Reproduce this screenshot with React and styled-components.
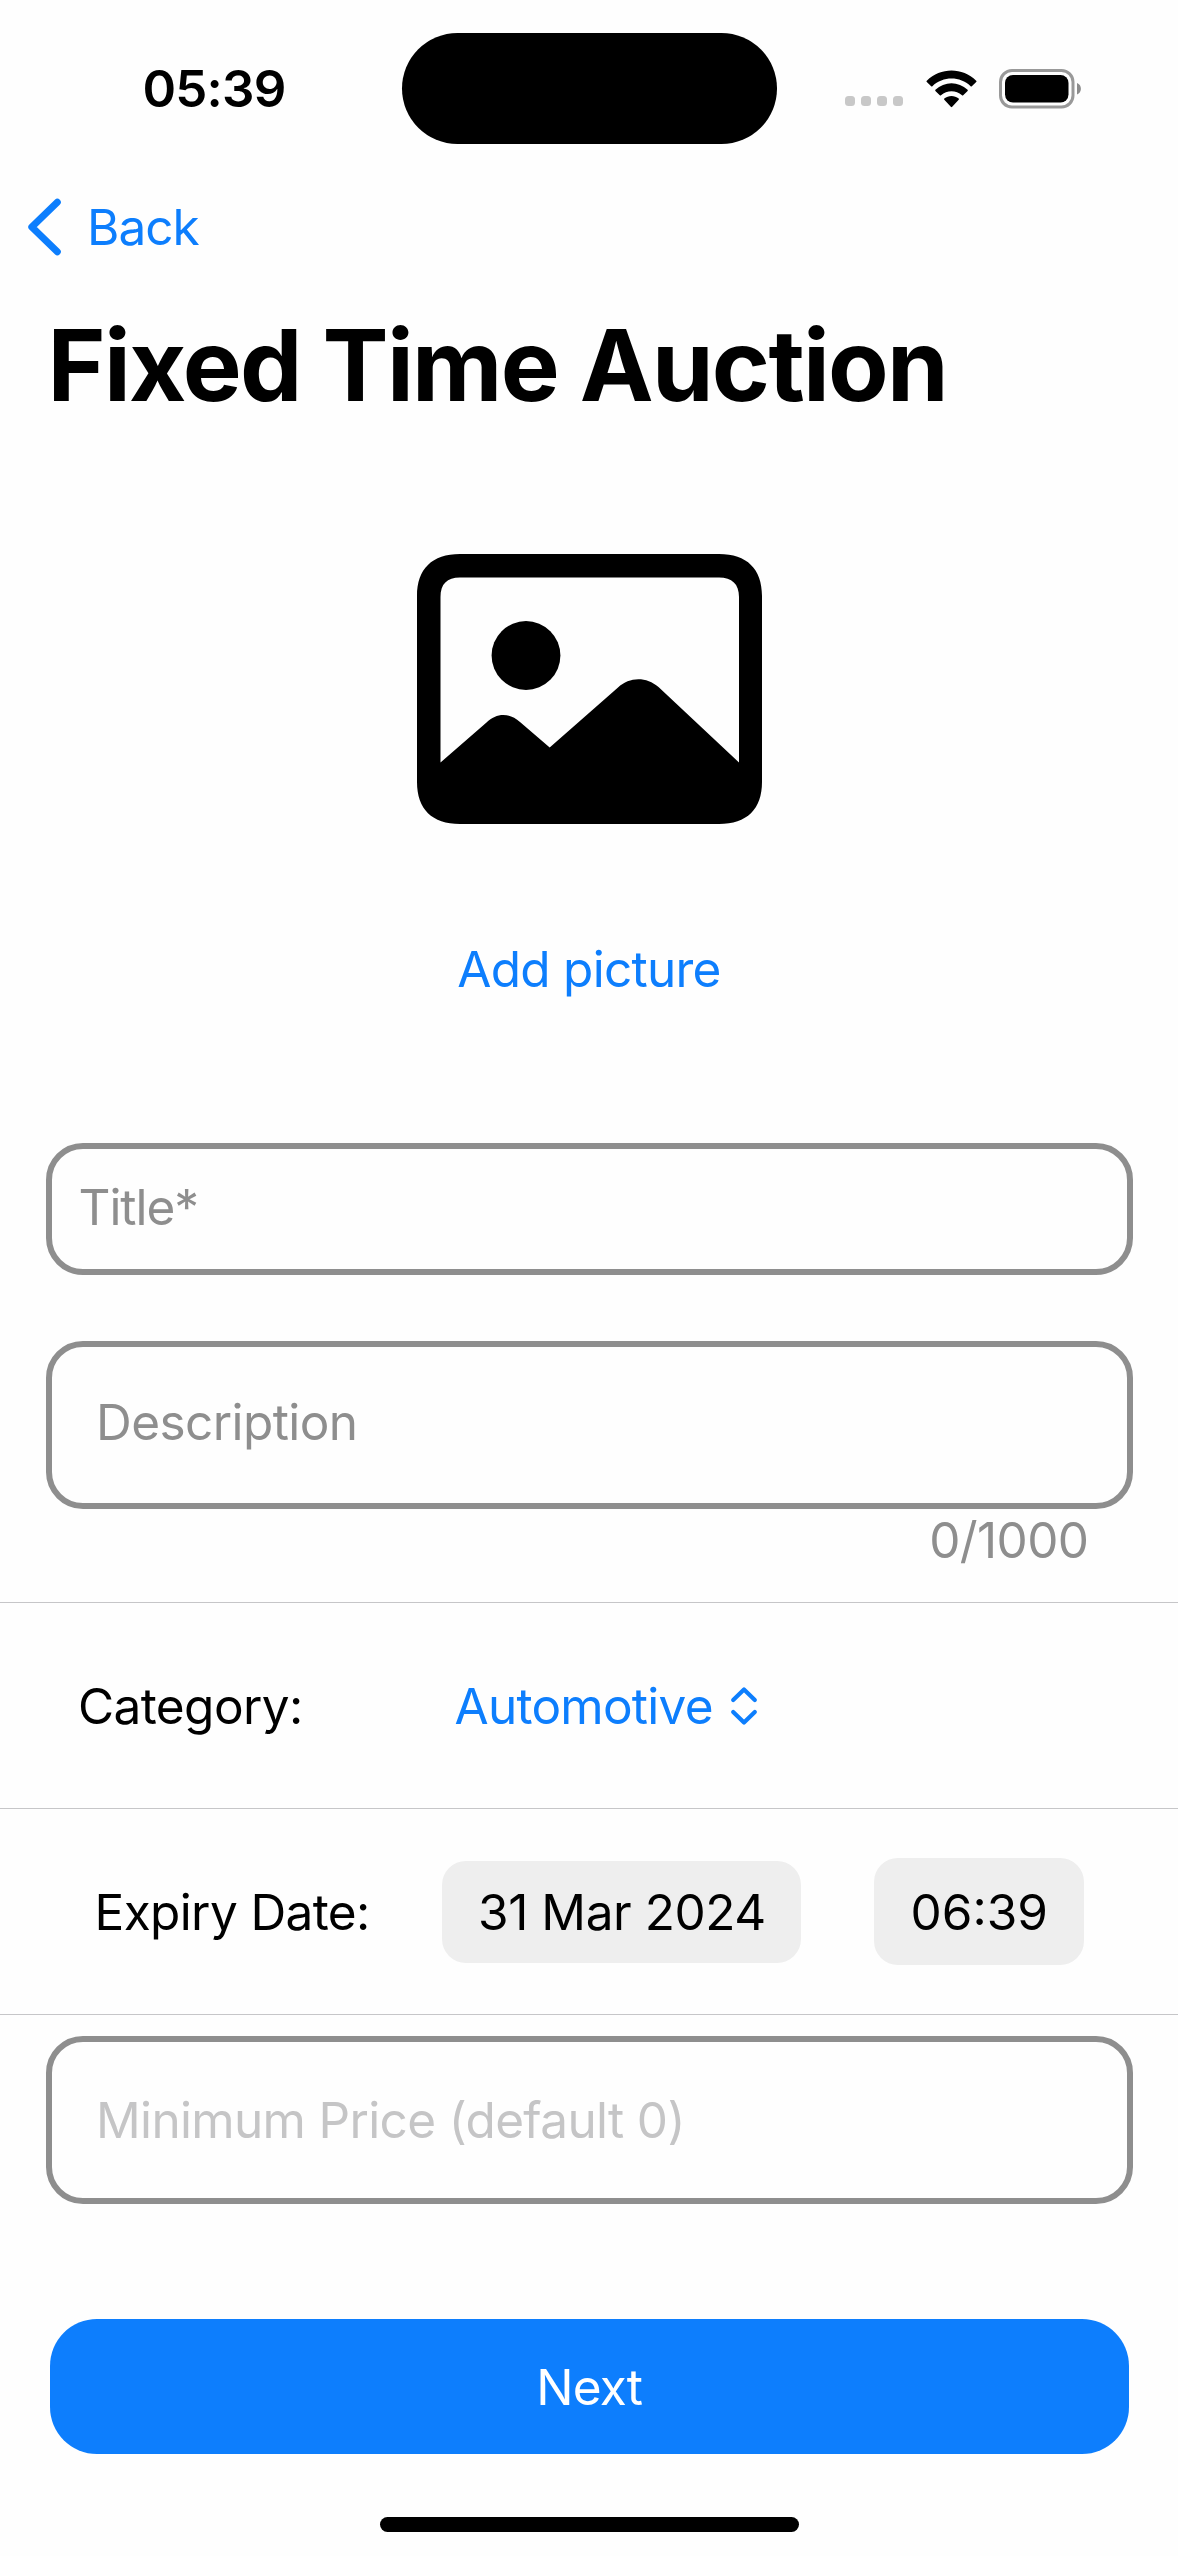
import React from "react";
import styled, { createGlobalStyle } from "styled-components";

const color = {
  page: "#fefefe",
  ink: "#000000",
  accent: "#0d7efd",
  grey: "#8e8e8e",
  placeholder: "#c5c5c6",
  line: "#c6c6c8",
  pill: "#eeeeee",
};

const GlobalStyle = createGlobalStyle`
  *, *::before, *::after { box-sizing: border-box; }
  body {
    margin: 0;
    background: ${color.page};
    font-family: Inter, "Liberation Sans", sans-serif;
  }
  button {
    margin: 0;
    padding: 0;
    border: 0;
    background: none;
    font: inherit;
    cursor: pointer;
  }
  svg { display: block; flex: none; }
`;

const Screen = styled.div`
  display: flex;
  flex-direction: column;
  width: 1178px;
  height: 2556px;
  overflow: hidden;
  background: ${color.page};
  color: ${color.ink};
`;

const Label = styled.span`
  font-size: 49.5px;
  line-height: 60px;
  font-weight: 400;
  white-space: nowrap;
  color: ${(p) => p.$color || "inherit"};
  letter-spacing: ${(p) => p.$tracking || 0}px;
`;

/* Status bar */
const StatusBar = styled.header`
  display: grid;
  grid-template-columns: 401.5px 375px 1fr;
  align-items: center;
  height: 177px;
  flex: none;
`;

const Clock = styled.time`
  padding-left: 142.5px;
  font-size: 51px;
  line-height: 60px;
  font-weight: 600;
  letter-spacing: -0.8px;
`;

const Island = styled.div`
  height: 110.5px;
  border-radius: 56px;
  background: ${color.ink};
`;

const Indicators = styled.div`
  display: flex;
  align-items: center;
  padding-left: 68.5px;
`;

const SignalDots = styled.div`
  display: flex;
  gap: 6px;
  margin: 25px 22.5px 0 0;
`;

const SignalDot = styled.i`
  width: 10px;
  height: 10px;
  border-radius: 3.5px;
  background: #c8c8c8;
`;

const BatterySlot = styled.div`
  margin-left: 22.5px;
`;

/* Navigation */
const NavBar = styled.nav`
  height: 100px;
  flex: none;
  display: flex;
  align-items: center;
  padding-left: 27px;
`;

const BackButton = styled.button`
  display: flex;
  align-items: center;
  gap: 25px;
  color: ${color.accent};
`;

const Heading = styled.h1`
  margin: 0;
  height: 176px;
  flex: none;
  padding-left: 47.5px;
  font-size: 99px;
  line-height: 176px;
  font-weight: 700;
  letter-spacing: -1.7px;
  white-space: nowrap;
`;

/* Picture */
const PictureSection = styled.section`
  display: flex;
  flex-direction: column;
  align-items: center;
  gap: 115px;
  height: 690px;
  flex: none;
  padding-top: 101px;
`;

/* Fields */
const Field = styled.div`
  display: flex;
  align-items: center;
  flex: none;
  height: ${(p) => p.$height}px;
  margin: ${(p) => p.$top || 0}px 45px 0 45.5px;
  padding-left: ${(p) => p.$inset}px;
  padding-bottom: ${(p) => p.$lift || 0}px;
  border: 6px solid ${color.grey};
  border-radius: 37px;
`;

const Counter = styled.div`
  display: flex;
  justify-content: flex-end;
  flex: none;
  height: 93px;
  padding: 1px 89.5px 0 0;
`;

const Row = styled.div`
  display: flex;
  align-items: center;
  flex: none;
  height: 206px;
  border-top: 1px solid ${color.line};
  padding-left: ${(p) => p.$inset}px;
`;

const RowLabel = styled(Label)`
  width: ${(p) => p.$width}px;
  flex: none;
`;

const Picker = styled.button`
  display: flex;
  align-items: center;
  gap: 17px;
  color: ${color.accent};
`;

const Pill = styled.button`
  display: flex;
  align-items: center;
  flex: none;
  width: ${(p) => p.$width}px;
  height: ${(p) => p.$height}px;
  padding-left: ${(p) => p.$inset}px;
  margin-left: ${(p) => p.$gap || 0}px;
  border-radius: 24px;
  background: ${color.pill};
  color: ${color.ink};
`;

const PriceSection = styled.section`
  flex: none;
  height: 305px;
  border-top: 1px solid ${color.line};
`;

const NextButton = styled.button`
  display: flex;
  align-items: center;
  justify-content: center;
  flex: none;
  height: 135px;
  margin: 0 49.5px 0 50px;
  border-radius: 47px;
  background: ${color.accent};
  color: #ffffff;
`;

const HomeIndicator = styled.div`
  flex: none;
  align-self: center;
  width: 419px;
  height: 15px;
  margin-top: 63px;
  border-radius: 7.5px;
  background: ${color.ink};
`;

const WifiIcon = () => (
  <svg width="51" height="38" viewBox="0 0 51 38">
    <path d="M0.8 10.8 Q0.2 11.4 0.8 12 L5.2 16.2 Q5.8 16.7 6.4 16.2 C17 6 34 6 44.6 16.2 Q45.2 16.7 45.8 16.2 L50.2 12 Q50.8 11.4 50.2 10.8 C36.5 -2.9 14.5 -2.9 0.8 10.8Z" />
    <path d="M9.4 19.8 Q8.9 20.4 9.4 21 L13.8 25.3 Q14.4 25.8 15 25.3 C21 19.9 30 19.9 36 25.3 Q36.6 25.8 37.2 25.3 L41.6 21 Q42.1 20.4 41.6 19.8 C32.5 11.1 18.5 11.1 9.4 19.8Z" />
    <path d="M18.3 28.6 Q17.7 29.2 18.3 29.8 L24.8 36.8 Q25.5 37.5 26.2 36.8 L32.7 29.8 Q33.3 29.2 32.7 28.6 C28.6 25 22.4 25 18.3 28.6Z" />
  </svg>
);

const BatteryIcon = () => (
  <svg width="84" height="40" viewBox="0 0 84 40">
    <rect x="1.5" y="1.5" width="72.5" height="36.5" rx="11.5" fill="none" stroke="#999999" strokeWidth="3" />
    <rect x="6" y="6" width="63.5" height="27.5" rx="8" />
    <path d="M78 14 C83.2 16 83.2 23.5 78 25.5Z" fill="#8c8c8c" />
  </svg>
);

const BackIcon = () => (
  <svg width="35" height="58" viewBox="0 0 35 58" fill="none" stroke={color.accent} strokeWidth="7" strokeLinecap="round" strokeLinejoin="round">
    <path d="M30.3 4.2 L4.8 29 L30.3 53.8" />
  </svg>
);

const UpDownIcon = () => (
  <svg width="28" height="42" viewBox="0 0 28 42" fill="none" stroke={color.accent} strokeWidth="4.2" strokeLinecap="round" strokeLinejoin="round">
    <path d="M3.200 15 L14 4.4 L24.8 15" />
    <path d="M3.200 27 L14 37.6 L24.8 27" />
  </svg>
);

const PhotoIcon = () => (
  <svg width="345" height="270" viewBox="0 0 345 270">
    <path
      fillRule="evenodd"
      d="M43 0 H302 C330 0 345 15 345 42 V228 C345 255 330 270 302 270 H43 C15 270 0 255 0 228 V42 C0 15 15 0 43 0Z
         M43 23.5 C30 23.5 23.5 30 23.5 43 V208.5 L69.5 168.5 C79.500 158.5 92.5 158.5 103 168 L132.7 193.5 L201 133.5 C212.5 122.5 229.5 122.5 241.5 133 L322 208.5 V43 C322 30 315 23.5 302 23.5Z"
    />
    <circle cx="109" cy="101.5" r="34.4" />
  </svg>
);

export default function App() {
  return (
    <>
      <GlobalStyle />
      <Screen>
        <StatusBar>
          <Clock>05:39</Clock>
          <Island />
          <Indicators>
            <SignalDots>
              <SignalDot />
              <SignalDot />
              <SignalDot />
              <SignalDot />
            </SignalDots>
            <WifiIcon />
            <BatterySlot>
              <BatteryIcon />
            </BatterySlot>
          </Indicators>
        </StatusBar>

        <NavBar>
          <BackButton>
            <BackIcon />
            <Label $tracking={-0.95}>Back</Label>
          </BackButton>
        </NavBar>
        <Heading>Fixed Time Auction</Heading>

        <PictureSection>
          <PhotoIcon />
          <button>
            <Label $color={color.accent} $tracking={-0.72}>Add picture</Label>
          </button>
        </PictureSection>

        <Field $height={132} $inset={27} $lift={4}>
          <Label $color={color.grey} $tracking={-1.05}>Title*</Label>
        </Field>
        <Field $height={168} $top={66} $inset={44.5} $lift={6}>
          <Label $color={color.grey} $tracking={-0.58}>Description</Label>
        </Field>
        <Counter>
          <Label $color={color.grey} $tracking={-0.6}>0/1000</Label>
        </Counter>

        <Row $inset={78}>
          <RowLabel $width={376.5} $tracking={-0.6}>Category:</RowLabel>
          <Picker>
            <Label $tracking={-0.75}>Automotive</Label>
            <UpDownIcon />
          </Picker>
        </Row>
        <Row $inset={94.5}>
          <RowLabel $width={347} $tracking={-0.62}>Expiry Date:</RowLabel>
          <Pill $width={359.5} $height={102} $inset={36.5}>
            <Label $tracking={-0.42}>31 Mar 2024</Label>
          </Pill>
          <Pill $width={210} $height={107} $inset={37} $gap={72.5}>
            <Label $tracking={0}>06:39</Label>
          </Pill>
        </Row>
        <PriceSection>
          <Field $height={168} $top={21} $inset={44.5}>
            <Label $color={color.placeholder} $tracking={-0.66}>
              Minimum Price (default 0)
            </Label>
          </Field>
        </PriceSection>

        <NextButton>
          <Label $tracking={-0.85}>Next</Label>
        </NextButton>
        <HomeIndicator />
      </Screen>
    </>
  );
}
